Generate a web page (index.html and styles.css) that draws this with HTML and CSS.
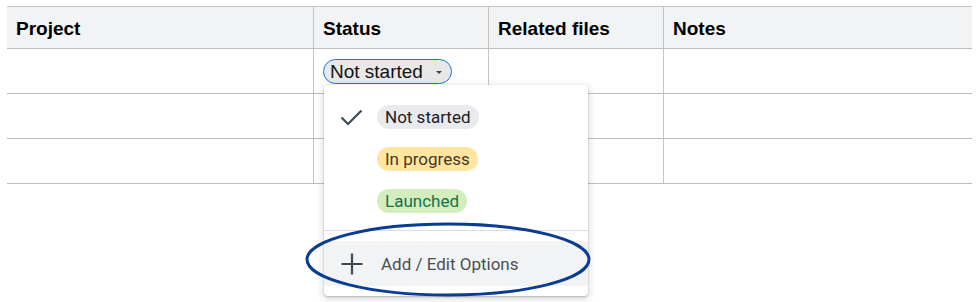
FILE: index.html
```html
<!DOCTYPE html>
<html>
<head>
<meta charset="utf-8">
<link rel="stylesheet" href="styles.css">
</head>
<body>
<div class="sheet">
  <div class="row head">
    <div class="cell">Project</div>
    <div class="cell">Status</div>
    <div class="cell">Related files</div>
    <div class="cell">Notes</div>
  </div>
  <div class="row">
    <div class="cell"></div>
    <div class="cell status-cell"><span class="sel-chip">Not started<span class="arrow"></span></span></div>
    <div class="cell"></div>
    <div class="cell"></div>
  </div>
  <div class="row">
    <div class="cell"></div><div class="cell"></div><div class="cell"></div><div class="cell"></div>
  </div>
  <div class="row">
    <div class="cell"></div><div class="cell"></div><div class="cell"></div><div class="cell"></div>
  </div>
</div>

<div class="menu">
  <div class="item">
    <svg class="check" width="24" height="22" viewBox="0 0 24 22"><polyline points="1.5,11.5 8,18 21.5,4.5" fill="none" stroke="#3c4a52" stroke-width="2.2"/></svg>
    <span class="chip grey">Not started</span>
  </div>
  <div class="item">
    <span class="check"></span>
    <span class="chip yellow">In progress</span>
  </div>
  <div class="item">
    <span class="check"></span>
    <span class="chip green">Launched</span>
  </div>
  <div class="sep"></div>
  <div class="add">
    <svg class="plus" width="22" height="22" viewBox="0 0 22 22"><path d="M0.5 11H21.5M11 0.5V21.5" fill="none" stroke="#3c4a52" stroke-width="2.2"/></svg>
    <span class="add-label">Add / Edit Options</span>
  </div>
</div>

<svg class="ring" width="287" height="75" viewBox="0 0 287 75"><ellipse cx="143" cy="37.5" rx="141" ry="35.5" fill="none" stroke="#0b3c93" stroke-width="3"/></svg>
</body>
</html>
```

FILE: styles.css
```css
html, body {
  margin: 0;
  padding: 0;
  background: #fff;
}
body {
  width: 980px;
  height: 302px;
  overflow: hidden;
  position: relative;
  font-family: "Liberation Sans", Arial, sans-serif;
}
.sheet {
  margin: 6px 0 0 7px;
  width: 965px;
  border-top: 1px solid #c4c4c4;
}
.row {
  display: grid;
  grid-template-columns: 307px 175px 175px 308px;
  height: 45px;
  border-bottom: 1px solid #bdbdbd;
  box-sizing: border-box;
}
.row.head {
  height: 42px;
  background: #f1f3f4;
  border-bottom: 1px solid #bdbdbd;
}
.cell {
  box-sizing: border-box;
  border-right: 1px solid #c4c4c4;
}
.cell:last-child {
  border-right: none;
}
.head .cell {
  font-weight: bold;
  font-size: 19px;
  line-height: 22px;
  padding: 11px 0 0 9px;
  color: #000;
}
.status-cell {
  padding: 10px 0 0 9px;
}
.sel-chip {
  display: inline-flex;
  align-items: center;
  box-sizing: border-box;
  height: 25px;
  border: 1.5px solid #1a73e8;
  border-radius: 13px;
  background: #e8e8e8;
  padding: 0 9px 0 6px;
  font-size: 19px;
  line-height: 22px;
  color: #111;
}
.arrow {
  display: inline-block;
  width: 0;
  height: 0;
  margin-left: 13px;
  margin-top: 1px;
  border-left: 3px solid transparent;
  border-right: 3px solid transparent;
  border-top: 3.5px solid #444;
}
.menu {
  position: absolute;
  left: 324px;
  top: 85px;
  width: 264px;
  height: 211px;
  box-sizing: border-box;
  padding: 11px 0 10px;
  background: #fff;
  border-radius: 4px;
  box-shadow: 0 1px 2px rgba(60,64,67,.3), 0 2px 6px 2px rgba(60,64,67,.15);
  font-family: Roboto, "Liberation Sans", sans-serif;
}
.item {
  display: flex;
  align-items: center;
  height: 42px;
  padding-left: 16px;
}
.check {
  display: block;
  width: 24px;
  height: 22px;
  margin-right: 13px;
  flex: none;
}
.chip {
  display: inline-block;
  height: 24px;
  line-height: 24px;
  padding: 0 8px;
  border-radius: 12px;
  font-size: 17px;
}
.grey { background: #e8eaed; color: #202124; }
.yellow { background: #ffe5a0; color: #473821; }
.green { background: #d4edbc; color: #11734b; }
.sep {
  margin-top: 8px;
  height: 1px;
  background: #dadce0;
}
.add {
  margin-top: 10px;
  height: 45px;
  background: #f1f3f4;
  display: flex;
  align-items: center;
  padding-left: 17px;
}
.plus {
  display: block;
  flex: none;
  margin-right: 18px;
  margin-top: 0;
}
.add-label {
  font-size: 17px;
  color: #4b4f54;
  margin-top: 0;
}
.ring {
  position: absolute;
  left: 305px;
  top: 222px;
  overflow: visible;
}
```
